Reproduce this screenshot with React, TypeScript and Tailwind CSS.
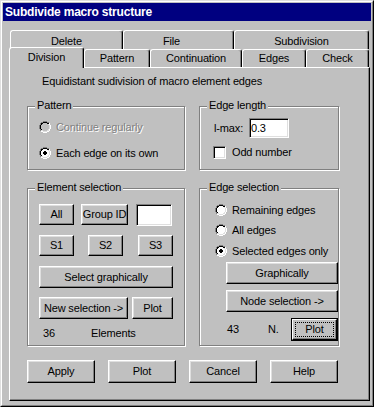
import React from "react";

const FF = "[font-family:'Liberation_Sans',Arial,sans-serif]";

const RADIO_MAP = [
  "....XXXX....",
  "..XXBBBBXX..",
  ".XBBWWWWBBH.",
  ".XBWWWWWWLH.",
  "XBWWWWWWWWLH",
  "XBWWWWWWWWLH",
  "XBWWWWWWWWLH",
  "XBWWWWWWWWLH",
  ".XBWWWWWWLH.",
  ".XLLWWWWLLH.",
  "..HHLLLLHH..",
  "....HHHH....",
];

const DOT: [number, number][] = [
  [5, 4], [6, 4],
  [4, 5], [5, 5], [6, 5], [7, 5],
  [4, 6], [5, 6], [6, 6], [7, 6],
  [5, 7], [6, 7],
];

function Radio({ checked = false, disabled = false }: { checked?: boolean; disabled?: boolean }) {
  const colors: Record<string, string> = {
    X: "#808080",
    B: "#000000",
    W: disabled ? "#c0c0c0" : "#ffffff",
    L: "#dfdfdf",
    H: "#ffffff",
  };
  const rects: React.ReactElement[] = [];
  RADIO_MAP.forEach((row, y) =>
    row.split("").forEach((c, x) => {
      if (c !== ".")
        rects.push(<rect key={`${x}-${y}`} x={x} y={y} width={1} height={1} fill={colors[c]} />);
    })
  );
  if (checked)
    DOT.forEach(([x, y]) =>
      rects.push(
        <rect key={`d${x}-${y}`} x={x} y={y} width={1} height={1} fill={disabled ? "#808080" : "#000000"} />
      )
    );
  return (
    <svg width={12} height={12} viewBox="0 0 12 12" shapeRendering="crispEdges" className="shrink-0">
      {rects}
    </svg>
  );
}

const RAISED =
  "bg-[#c0c0c0] border border-t-white border-l-white border-r-black border-b-black shadow-[inset_-1px_-1px_0_#808080,inset_1px_1px_0_#dfdfdf]";

function Btn({ className, children }: { className: string; children: React.ReactNode }) {
  return (
    <div className={`flex items-center justify-center shrink-0 leading-[13px] ${RAISED} ${className}`}>
      {children}
    </div>
  );
}

const SUNKEN =
  "bg-white border border-t-[#808080] border-l-[#808080] border-r-white border-b-white shadow-[inset_1px_1px_0_#000,inset_-1px_-1px_0_#dfdfdf]";

function Group({ label, className, children }: { label: string; className: string; children: React.ReactNode }) {
  return (
    <div className={`relative border border-[#808080] shadow-[inset_1px_1px_0_#fff,1px_1px_0_#fff] ${className}`}>
      <span className="absolute -top-[8px] left-[7px] bg-[#c0c0c0] px-[2px] leading-[13px] whitespace-nowrap">
        {label}
      </span>
      {children}
    </div>
  );
}

const TAB =
  "flex items-center justify-center shrink-0 bg-[#c0c0c0] border-l border-t border-r border-l-white border-t-white border-r-black rounded-tl-[3px] rounded-tr-[3px] shadow-[inset_-1px_0_0_#808080] leading-[13px] whitespace-nowrap";

export default function App() {
  return (
    <div
      className={`w-[374px] h-[407px] bg-[#c0c0c0] ${FF} text-[11px] tracking-[-0.15px] text-black border border-t-[#dfdfdf] border-l-[#dfdfdf] border-r-black border-b-black`}
    >
      <div className="w-full h-full border border-t-white border-l-white border-r-[#808080] border-b-[#808080] p-[1px] flex flex-col">
        <div className="h-[18px] shrink-0 bg-[#000080] text-white font-bold text-[12px] tracking-[-0.2px] pl-[2px] flex items-center">
          Subdivide macro structure
        </div>
        <div className="flex flex-col pl-[6px] pt-[9px]">
          {/* back tab row */}
          <div className="flex ml-[1px] h-[19px]">
            <div className={`${TAB} w-[113px] h-[19px] pt-[2px]`}>Delete</div>
            <div className={`${TAB} w-[111px] h-[19px] pt-[2px] pr-[14px]`}>File</div>
            <div className={`${TAB} w-[135px] h-[19px] pt-[2px]`}>Subdivision</div>
          </div>
          {/* front tab row */}
          <div className="flex items-end h-[18px]">
            <div className={`${TAB} relative z-10 w-[75px] h-[21px] -mb-[1px] pb-[2px]`}>Division</div>
            <div className={`${TAB} w-[66px] h-[18px]`}>Pattern</div>
            <div className={`${TAB} w-[92px] h-[18px]`}>Continuation</div>
            <div className={`${TAB} w-[64px] h-[18px]`}>Edges</div>
            <div className={`${TAB} w-[63px] h-[18px]`}>Check</div>
          </div>
          {/* panel */}
          <div className="w-[361px] h-[334px] border border-t-white border-l-white border-r-black border-b-black shadow-[inset_-1px_-1px_0_#808080] flex flex-col pl-[17px] pt-[7px]">
            <div className="ml-[15px] h-[13px] leading-[13px] whitespace-nowrap">
              Equidistant sudivision of macro element edges
            </div>

            <div className="flex gap-[14px] mt-[18px]">
              <Group label="Pattern" className="w-[158px] h-[64px]">
                <div className="flex flex-col pl-[11px] pt-[12px] gap-[10px]">
                  <div className="flex items-center h-[16px] gap-[5px]">
                    <Radio disabled />
                    <span className="text-[#808080] [text-shadow:1px_1px_0_#fff] leading-[13px]">
                      Continue regularly
                    </span>
                  </div>
                  <div className="flex items-center h-[16px] gap-[5px]">
                    <Radio checked />
                    <span className="leading-[13px]">Each edge on its own</span>
                  </div>
                </div>
              </Group>
              <Group label="Edge length" className="w-[140px] h-[64px]">
                <div className="flex flex-col pl-[14px] pt-[11px]">
                  <div className="flex items-center h-[20px]">
                    <span className="w-[35px] leading-[13px]">l-max:</span>
                    <div className={`w-[40px] h-[20px] ${SUNKEN} flex items-center pl-[1px] leading-[13px]`}>
                      0.3
                    </div>
                  </div>
                  <div className="flex items-center mt-[8px] -ml-[1px] gap-[6px] h-[13px]">
                    <div className={`w-[13px] h-[13px] shrink-0 ${SUNKEN}`} />
                    <span className="leading-[13px]">Odd number</span>
                  </div>
                </div>
              </Group>
            </div>

            <div className="flex gap-[14px] mt-[18px]">
              <Group label="Element selection" className="w-[158px] h-[158px]">
                <div className="flex flex-col pl-[11px] pt-[15px]">
                  <div className="flex items-start">
                    <Btn className="w-[35px] h-[21px]">All</Btn>
                    <Btn className="ml-[7px] w-[47px] h-[21px]">Group ID</Btn>
                    <div className={`ml-[8px] w-[36px] h-[22px] ${SUNKEN}`} />
                  </div>
                  <div className="flex mt-[9px]">
                    <Btn className="w-[35px] h-[21px]">S1</Btn>
                    <Btn className="ml-[14px] w-[35px] h-[21px]">S2</Btn>
                    <Btn className="ml-[15px] w-[35px] h-[21px]">S3</Btn>
                  </div>
                  <div className="flex mt-[10px]">
                    <Btn className="w-[134px] h-[22px]">Select graphically</Btn>
                  </div>
                  <div className="flex mt-[9px]">
                    <Btn className="w-[89px] h-[22px]">New selection -&gt;</Btn>
                    <Btn className="ml-[4px] w-[41px] h-[22px]">Plot</Btn>
                  </div>
                  <div className="flex mt-[8px] h-[13px] leading-[13px] pl-[4px]">
                    <span className="w-[48px]">36</span>
                    <span>Elements</span>
                  </div>
                </div>
              </Group>
              <Group label="Edge selection" className="w-[140px] h-[158px]">
                <div className="flex flex-col pt-[11px]">
                  <div className="flex items-center h-[20px] pl-[15px] gap-[5px]">
                    <Radio />
                    <span className="leading-[13px]">Remaining edges</span>
                  </div>
                  <div className="flex items-center h-[20px] pl-[15px] gap-[5px]">
                    <Radio />
                    <span className="leading-[13px]">All edges</span>
                  </div>
                  <div className="flex items-center h-[20px] pl-[15px] gap-[5px] mt-[1px]">
                    <Radio checked />
                    <span className="leading-[13px]">Selected edges only</span>
                  </div>
                  <div className="flex ml-[26px] mt-[1px]">
                    <Btn className="w-[112px] h-[22px]">Graphically</Btn>
                  </div>
                  <div className="flex ml-[26px] mt-[6px]">
                    <Btn className="w-[112px] h-[22px]">Node selection -&gt;</Btn>
                  </div>
                  <div className="flex items-center mt-[6px] h-[23px] leading-[13px]">
                    <span className="ml-[27px] w-[41px]">43</span>
                    <span className="w-[23px]">N.</span>
                    <div className="w-[47px] h-[23px] shrink-0 border border-black flex">
                      <div className="flex-1 flex border border-t-white border-l-white border-r-black border-b-black shadow-[inset_-1px_-1px_0_#808080] p-[2px]">
                        <div className="flex-1 flex items-center justify-center border border-dotted border-black">
                          Plot
                        </div>
                      </div>
                    </div>
                  </div>
                </div>
              </Group>
            </div>

            <div className="flex gap-[13px] mt-[14px]">
              <Btn className="w-[68px] h-[23px]">Apply</Btn>
              <Btn className="w-[68px] h-[23px]">Plot</Btn>
              <Btn className="w-[68px] h-[23px]">Cancel</Btn>
              <Btn className="w-[68px] h-[23px]">Help</Btn>
            </div>
          </div>
        </div>
      </div>
    </div>
  );
}
